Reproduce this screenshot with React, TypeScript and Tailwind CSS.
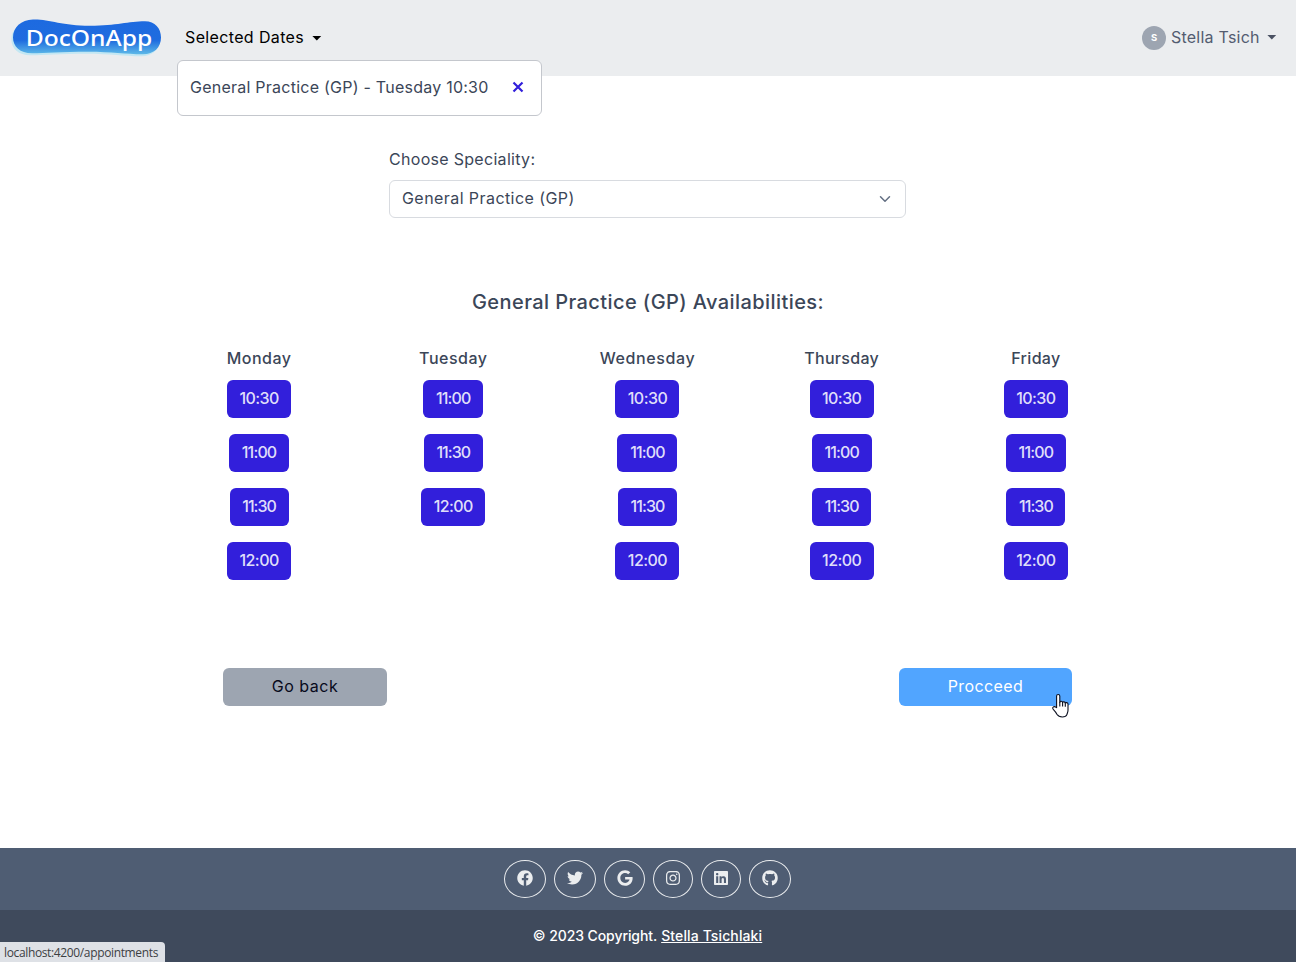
import { FaFacebook, FaGithub, FaGoogle, FaInstagram, FaLinkedin, FaTwitter } from "react-icons/fa";

const days = [
  { name: "Monday", tracking: "tracking-[0.5px]", times: ["10:30", "11:00", "11:30", "12:00"] },
  { name: "Tuesday", tracking: "tracking-[0.5px]", times: ["11:00", "11:30", "12:00"] },
  { name: "Wednesday", tracking: "tracking-[0.6px]", times: ["10:30", "11:00", "11:30", "12:00"] },
  { name: "Thursday", tracking: "tracking-[0.3px]", times: ["10:30", "11:00", "11:30", "12:00"] },
  { name: "Friday", tracking: "tracking-[0.3px]", times: ["10:30", "11:00", "11:30", "12:00"] },
];

const timeStyles: Record<string, string> = {
  "10:30": "w-16 tracking-[-0.55px]",
  "11:00": "w-[60px] tracking-[-0.85px]",
  "11:30": "w-[59px] tracking-[-0.95px]",
  "12:00": "w-16 tracking-[-0.55px]",
};

const socials = [
  { label: "Facebook", Icon: FaFacebook, size: "w-[42px]" },
  { label: "Twitter", Icon: FaTwitter, size: "w-[42px]" },
  { label: "Google", Icon: FaGoogle, size: "w-[41px]" },
  { label: "Instagram", Icon: FaInstagram, size: "w-10" },
  { label: "LinkedIn", Icon: FaLinkedin, size: "w-10" },
  { label: "GitHub", Icon: FaGithub, size: "w-[42px]" },
];

function Logo() {
  const shape =
    "M33 19 C49 18.5 62 25.3 90 25.3 C117 25.3 128 20.8 145 20.8 C155 20.8 161 28 161 37 C161 47 154 53.8 143 53.8 C125 53.8 112 51.3 88 51.3 C62 51.3 45 52.8 32 52.8 C20 52.8 13 46 13 37 C13 27 21 19.3 33 19 Z";
  return (
    <svg width="154" height="42" viewBox="10 16.5 154 42" aria-label="DocOnApp">
      <defs>
        <linearGradient id="logoFill" x1="0" y1="0" x2="0" y2="1">
          <stop offset="0" stopColor="#1d6ae0" />
          <stop offset="0.6" stopColor="#1f6cdf" />
          <stop offset="1" stopColor="#5db9e8" />
        </linearGradient>
      </defs>
      <path d={shape} fill="#c3e7f3" transform="translate(-1.6 2)" />
      <path d={shape} fill="url(#logoFill)" />
      <text
        x="25.7"
        y="45"
        textLength="126.5"
        lengthAdjust="spacingAndGlyphs"
        fill="#fff"
        className="font-['Noto_Sans',sans-serif] text-[21.5px] font-medium"
      >
        DocOnApp
      </text>
    </svg>
  );
}

function Caret() {
  return (
    <svg width="10" height="5" viewBox="0 0 10 5" className="shrink-0">
      <path d="M0.4 0h8.8L4.8 4.6z" fill="currentColor" />
    </svg>
  );
}

function HandCursor() {
  return (
    <svg width="19" height="26" viewBox="0 0 19 26" className="absolute top-[25px] left-[152px]">
      <path
        d="M5.6 14.6V3.1c0-2.200 3.200-2.200 3.200 0v6.200c.2-1.400 2.700-1.300 2.800.3.3-1.200 2.600-1 2.700.6.4-1 2.700-.8 2.700.9v6.200c0 2.200-.9 3-1.100 4.300-.6 1.700-2.200 2.400-4.600 2.400-2.900 0-4.300-1-5.400-2.700-.8-1.500-1.600-2.800-3.200-4.400-2.400-2.300-.1-4.500 2.900-2.300z"
        fill="#fff"
        stroke="#0b1020"
        strokeWidth="1.1"
        strokeLinejoin="round"
      />
      <path d="M8.8 9v4.500M11.600 9.600v4M14.300 10.200v3.500" stroke="#0b1020" strokeWidth="1.1" fill="none" />
    </svg>
  );
}

export default function App() {
  return (
    <div className="relative flex h-[962px] w-full flex-col overflow-hidden bg-white font-['Inter',sans-serif] text-base leading-6 text-[#3b4658]">
      <header className="flex h-[76px] shrink-0 items-center bg-[#ebedef] pr-[19px] pl-[10px]">
        <Logo />
        <div className="relative ml-[21px]">
          <button className="flex items-center text-black">
            <span className="w-[127px] pb-0.5 text-left tracking-[0.36px] whitespace-nowrap">Selected Dates</span>
            <Caret />
          </button>
          <div className="absolute top-[35px] left-[-8px] z-10 flex h-14 w-[365px] items-start rounded-md border border-[#c4c7cd] bg-white pt-[14px] pl-3">
            <span className="tracking-[0.24px] whitespace-nowrap">General Practice (GP) - Tuesday 10:30</span>
            <svg width="12" height="12" viewBox="0 0 12 12" className="mt-1.5 mr-[17px] ml-auto shrink-0">
              <path d="M1.5 1.5l9 9M10.5 1.5l-9 9" stroke="#321fdb" strokeWidth="2.2" />
            </svg>
          </div>
        </div>
        <button className="ml-auto flex items-center">
          <span className="flex size-6 items-center justify-center rounded-full bg-[#9da5b1] text-[9.5px] font-bold text-white">S</span>
          <span className="ml-[5px] w-[96px] pb-0.5 text-left tracking-[0.23px] whitespace-nowrap text-[#535c70]">Stella Tsich</span>
          <span className="flex h-6 items-center pb-0.5 text-[#4a5162]">
            <Caret />
          </span>
        </button>
      </header>

      <main className="flex grow flex-col">
        <div className="mt-[71px] ml-[389px] w-[517px]">
          <label className="block tracking-[0.3px]">Choose Speciality:</label>
          <div className="mt-[9px] flex h-[38px] items-center justify-between rounded-md border border-[#d8dbe0] pr-[14px] pl-3">
            <span className="pb-0.5 tracking-[0.43px]">General Practice (GP)</span>
            <svg width="12" height="12" viewBox="0 0 16 16" fill="none" className="shrink-0">
              <path d="m2 5 6 6 6-6" stroke="#636f83" strokeWidth="2" strokeLinecap="round" strokeLinejoin="round" />
            </svg>
          </div>
        </div>

        <h5 className="mt-[72px] text-center text-xl leading-6 font-medium tracking-[0.42px]">General Practice (GP) Availabilities:</h5>

        <div className="mt-8 ml-[162px] grid w-[971px] grid-cols-5">
          {days.map((day) => (
            <div key={day.name} className="flex flex-col items-center">
              <h6 className={`font-medium ${day.tracking}`}>{day.name}</h6>
              <div className="mt-[10px] flex flex-col items-center gap-4">
                {day.times.map((time) => (
                  <button
                    key={time}
                    className={`flex h-[38px] items-center justify-center rounded-md bg-[#321fdb] pb-0.5 font-medium text-white/87 ${timeStyles[time]}`}
                  >
                    {time}
                  </button>
                ))}
              </div>
            </div>
          ))}
        </div>

        <div className="mt-[88px] ml-[223px] flex w-[849px] justify-between">
          <button className="h-[38px] w-[164px] rounded-md bg-[#9da5b1] pb-0.5 tracking-[0.5px] text-[#080a1c]">Go back</button>
          <div className="relative">
            <button className="h-[38px] w-[173px] rounded-md bg-[#51a5ff] pb-0.5 tracking-[0.4px] text-white">Procceed</button>
            <HandCursor />
          </div>
        </div>
      </main>

      <footer className="shrink-0 text-white">
        <div className="flex h-[62px] items-center justify-center gap-2 bg-[#4f5d73] pr-px">
          {socials.map(({ label, Icon, size }) => (
            <a key={label} aria-label={label} className={`flex h-[38px] items-center justify-center rounded-[50%] border border-[#ebedef] pb-0.5 text-[#ebedef] ${size}`}>
              <Icon size={16} />
            </a>
          ))}
        </div>
        <div className="flex h-[52px] items-center justify-center gap-1 bg-[#3f4a5c] pr-px text-sm font-medium">
          <span className="tracking-[-0.08px]">© 2023 Copyright.</span>
          <a className="tracking-[0.12px] underline">Stella Tsichlaki</a>
        </div>
      </footer>

      <div className="absolute bottom-0 left-0 flex h-5 w-[165px] items-center rounded-tr-[4px] bg-[#dee1e6] pt-0.5 pl-1 font-['Open_Sans',sans-serif] text-xs tracking-[-0.36px] whitespace-nowrap text-[#3c4043]">
        localhost:4200/appointments
      </div>
    </div>
  );
}
